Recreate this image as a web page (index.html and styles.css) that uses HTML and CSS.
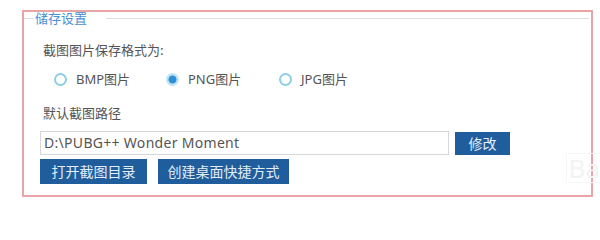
FILE: index.html
```html
<!DOCTYPE html>
<html lang="zh-CN">
<head>
<meta charset="utf-8">
<title>储存设置</title>
<link rel="stylesheet" href="styles.css">
</head>
<body>
<div class="frame">
  <div class="group-head">
    <span class="line short"></span>
    <span class="group-title">储存设置</span>
    <span class="line long"></span>
  </div>
  <div class="group-body">
    <div class="label first">截图图片保存格式为:</div>
    <div class="radios">
      <label class="radio"><span class="dot"></span><span>BMP图片</span></label>
      <label class="radio"><span class="dot checked"></span><span>PNG图片</span></label>
      <label class="radio"><span class="dot"></span><span>JPG图片</span></label>
    </div>
    <div class="label second">默认截图路径</div>
    <div class="path-row">
      <div class="path-input">D:\PUBG++ Wonder Moment</div>
      <button class="btn btn-edit">修改</button>
    </div>
    <div class="btn-row">
      <button class="btn btn-open">打开截图目录</button>
      <button class="btn btn-shortcut">创建桌面快捷方式</button>
    </div>
  </div>
  <div class="watermark">Ba</div>
</div>
</body>
</html>
```

FILE: styles.css
```css
* { box-sizing: border-box; }
html, body {
  margin: 0;
  padding: 0;
  background: #ffffff;
}
body {
  width: 600px;
  height: 202px;
  overflow: hidden;
  font-family: "Noto Sans", "Noto Sans CJK SC", sans-serif;
  color: #5a5a5a;
}
.frame {
  position: relative;
  margin: 10px 0 0 22px;
  width: 571px;
  height: 187px;
  border: 2px solid #e9a4a8;
}
.group-head {
  display: flex;
  align-items: center;
  height: 12px;
}
.line {
  height: 1px;
  background: #d9dde2;
}
.line.short { width: 9px; }
.line.long { flex: 1; margin-left: 19px; margin-right: 2px; }
.group-title {
  margin-left: 2px;
  font-family: "Noto Sans CJK SC", sans-serif;
  font-size: 13px;
  line-height: 12px;
  color: #4a8fd2;
}
.group-body {
  display: flex;
  flex-direction: column;
  padding-left: 16px;
}
.label {
  font-family: "Noto Sans CJK SC", sans-serif;
  font-size: 13px;
  line-height: 18px;
  padding-left: 3px;
  color: #555555;
}
.label.first { margin-top: 17px; }
.label.second { margin-top: 16px; }
.radios {
  display: flex;
  margin-top: 11px;
  height: 18px;
  padding-left: 14px;
}
.radio {
  display: flex;
  align-items: center;
  gap: 9px;
  font-size: 13px;
  line-height: 18px;
  color: #555555;
}
.radio:nth-child(1) { width: 112px; }
.radio:nth-child(2) { width: 113px; }
.dot {
  width: 13px;
  height: 13px;
  border-radius: 50%;
  border: 2px solid #8ccfe6;
  background: #fff;
  flex: none;
}
.dot.checked {
  border-color: #bfe3f3;
  background: radial-gradient(circle, #2e8fd6 0 3.5px, #bfe3f3 4.5px 100%);
}
.path-row {
  display: flex;
  align-items: center;
  margin-top: 9px;
  height: 24px;
  gap: 6px;
}
.path-input {
  width: 409px;
  height: 24px;
  border: 1px solid #d7d7d7;
  padding-left: 3px;
  font-size: 14px;
  line-height: 22px;
  color: #555;
  letter-spacing: 0.3px;
}
.btn {
  border: none;
  margin: 0;
  padding: 0;
  background: #1f5d9d;
  color: #e4edf7;
  font-family: "Noto Sans CJK SC", sans-serif;
  font-size: 14px;
  line-height: 23px;
  text-align: center;
}
.btn-edit { width: 55px; height: 23px; }
.btn-row {
  display: flex;
  gap: 11px;
  margin-top: 4px;
}
.btn-open { width: 107px; height: 25px; }
.btn-shortcut { width: 131px; height: 25px; }
.watermark {
  position: absolute;
  right: -12px;
  bottom: 12px;
  font-size: 26px;
  line-height: 28px;
  color: #f3f3f3;
  border: 1px solid #f6f6f6;
  padding: 0 2px;
}
```
